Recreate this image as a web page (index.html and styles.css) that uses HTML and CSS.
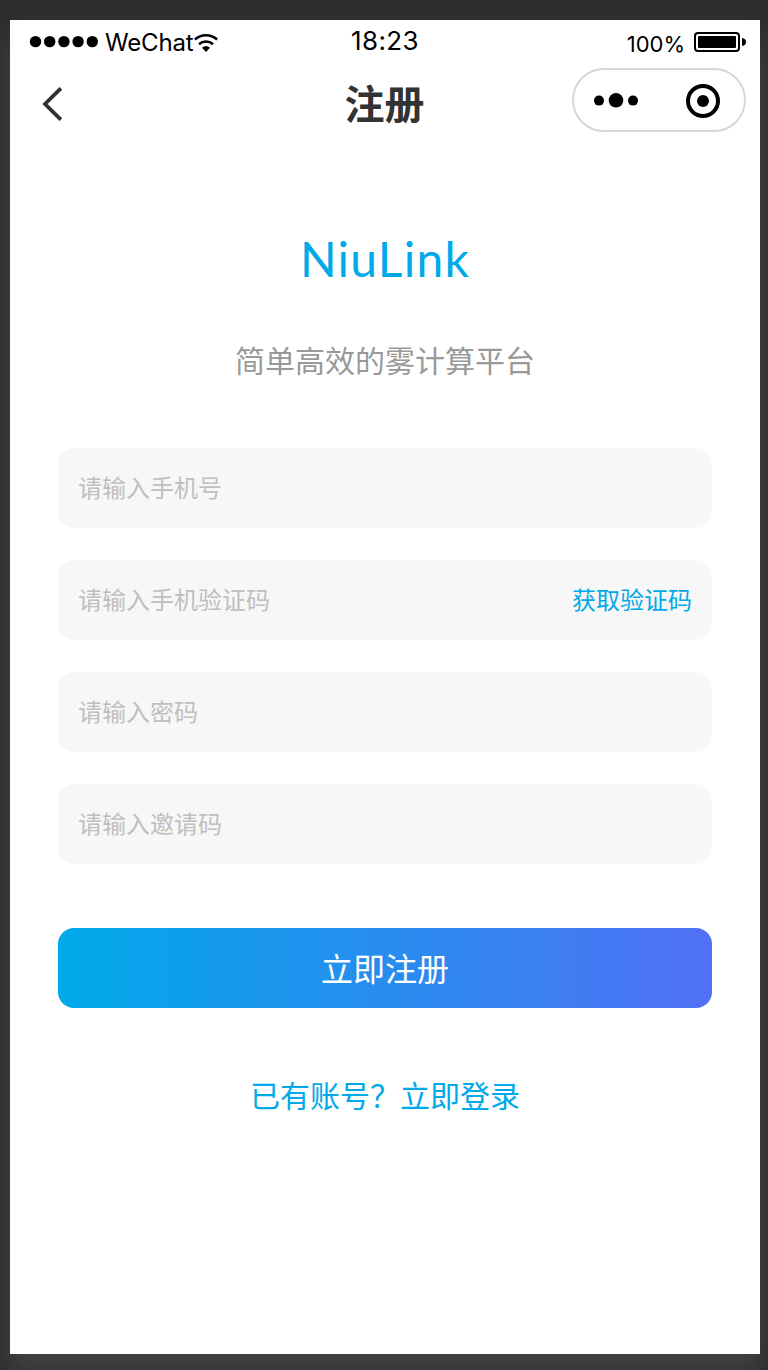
FILE: index.html
```html
<!DOCTYPE html>
<html lang="zh-CN">
<head>
<meta charset="utf-8">
<title>注册</title>
<link rel="stylesheet" href="styles.css">
</head>
<body>
<main class="screen">
  <header class="status">
    <div class="carrier">
      <svg class="signal" width="70" height="14" viewBox="0 0 70 14"><circle cx="6.5" cy="6.6" r="5.7"/><circle cx="20.7" cy="6.6" r="5.7"/><circle cx="34.9" cy="6.6" r="5.7"/><circle cx="49.1" cy="6.6" r="5.7"/><circle cx="63.3" cy="6.6" r="5.7"/></svg>
      <span class="carrier-name">WeChat</span>
      <svg class="wifi" width="24" height="20" viewBox="0 0 24 20"><path d="M.9 6.5a16.5 16.5 0 0 1 22.2 0M5 11.2a10.3 10.3 0 0 1 14 0" fill="none" stroke="#000" stroke-width="2.6"/><path d="M8 14.8a6.2 6.2 0 0 1 8 0L12 19z"/></svg>
    </div>
    <span class="time">18:23</span>
    <div class="power">
      <span class="percent">100%</span>
      <svg width="52" height="20" viewBox="0 0 52 20"><rect x="1" y="1" width="44" height="18" rx="3" fill="none" stroke="#000" stroke-width="2"/><rect x="4" y="4" width="38" height="12" rx="1"/><path d="M48 6q4 .5 4 4t-4 4z"/></svg>
    </div>
  </header>
  <nav class="navbar">
    <svg class="back" width="20" height="34" viewBox="0 0 20 34"><path d="M18.9 1.3 3 17l15.9 15.7" fill="none" stroke="#333" stroke-width="3.8"/></svg>
    <h1 class="title">注册</h1>
    <div class="capsule">
      <svg width="44" height="16" viewBox="0 0 44 16"><circle cx="5" cy="8.6" r="5"/><circle cx="22" cy="8.3" r="7.3"/><circle cx="39" cy="8.6" r="5"/></svg>
      <svg class="close" width="34" height="34" viewBox="0 0 34 34"><circle cx="17" cy="17" r="15" fill="none" stroke="#000" stroke-width="4"/><circle cx="17" cy="17" r="6"/></svg>
    </div>
  </nav>
  <section class="brand">
    <div class="logo">NiuLink</div>
    <p class="slogan">简单高效的雾计算平台</p>
  </section>
  <form class="form">
    <div class="field"><input class="input" placeholder="请输入手机号"></div>
    <div class="field"><input class="input" placeholder="请输入手机验证码"><span class="code">获取验证码</span></div>
    <div class="field"><input class="input" placeholder="请输入密码"></div>
    <div class="field"><input class="input" placeholder="请输入邀请码"></div>
    <button class="submit" type="button">立即注册</button>
  </form>
  <div class="login">已有账号？立即登录</div>
</main>
</body>
</html>
```
FILE: styles.css
```css
* { box-sizing: border-box; }
body {
  margin: 0;
  height: 1370px;
  padding: 20px 8px 16px 10px;
  overflow: hidden;
  background: #2e2e2e;
  font-family: "Noto Sans CJK SC", sans-serif;
}
svg { display: block; flex: none; }
.screen {
  height: 1334px;
  background: #fff;
  box-shadow: 0 18px 26px rgba(255, 255, 255, .1);
}
.status {
  display: grid;
  grid-template-columns: 1fr auto 1fr;
  height: 44px;
  padding: 0 14px 0 19px;
  align-items: center;
  font-family: Inter, sans-serif;
  color: #000;
}
.carrier, .power { display: flex; align-items: center; }
.carrier-name {
  width: 89px;
  margin-left: 6px;
  font-size: 24px;
  letter-spacing: -.15px;
}
.time {
  height: 44px;
  margin-left: -5px;
  font-size: 26px;
  line-height: 42px;
  letter-spacing: .4px;
}
.power { justify-content: flex-end; }
.percent { margin: 4px 9px 0 0; font-size: 22px; }
.wifi { margin-top: 1px; }
.navbar {
  display: grid;
  grid-template-columns: 1fr auto 1fr;
  height: 80px;
  padding: 0 14px 0 32px;
  align-items: center;
}
.title {
  margin: 0 0 0 -19px;
  font-size: 40px;
  line-height: 76px;
  height: 80px;
  font-weight: 700;
  color: #333;
}
.capsule {
  display: flex;
  width: 174px;
  height: 64px;
  margin-top: -8px;
  padding: 0 24px 0 20px;
  justify-self: end;
  align-items: center;
  justify-content: space-between;
  border: 2px solid #d7d7d7;
  border-radius: 32px;
}
.close { margin-top: 2px; }
.brand { padding-top: 80px; text-align: center; }
.logo {
  font-family: Lato, sans-serif;
  font-size: 48px;
  line-height: 70px;
  letter-spacing: 1.2px;
  color: #00a9e9;
}
.slogan {
  margin: 43px 0 0;
  font-size: 30px;
  line-height: 44px;
  color: #999;
}
.form {
  display: flex;
  flex-direction: column;
  gap: 32px;
  padding: 67px 48px 0;
}
.field {
  display: flex;
  height: 80px;
  padding: 0 20px 4px;
  align-items: center;
  border-radius: 16px;
  background: #f7f7f7;
  font-size: 24px;
}
.input {
  flex: 1;
  min-width: 0;
  height: 40px;
  padding: 0;
  border: 0;
  outline: 0;
  background: transparent;
  font: inherit;
}
.input::placeholder { color: #bfbfbf; opacity: 1; }
.code { color: #00a9e9; }
.submit {
  height: 80px;
  margin-top: 32px;
  padding: 0 0 2px;
  border: 0;
  border-radius: 16px;
  background: linear-gradient(90deg, #00a9e9, #5170f5);
  font: 32px/78px "Noto Sans CJK SC", sans-serif;
  color: #fff;
}
.login {
  margin-top: 64px;
  font-size: 30px;
  line-height: 44px;
  text-align: center;
  color: #00a9e9;
}
```
